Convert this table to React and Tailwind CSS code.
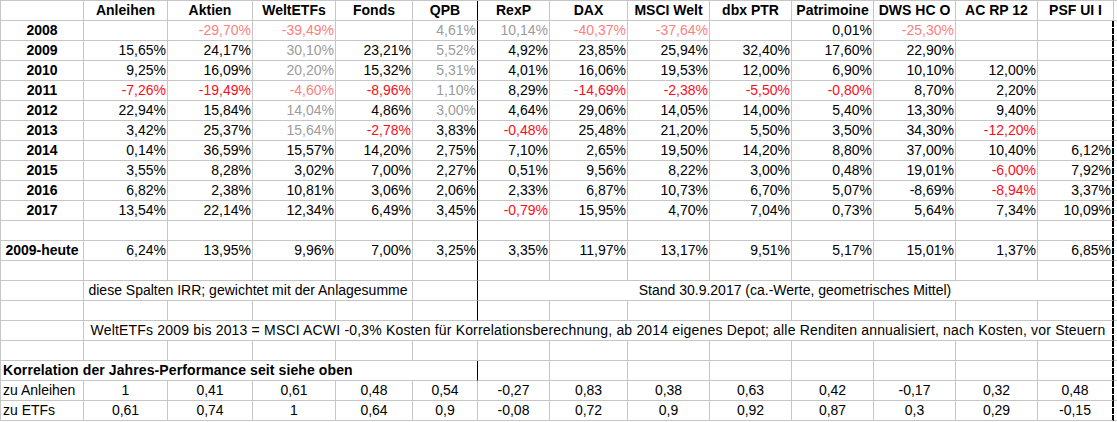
import React from "react";
import clsx from "clsx";

const headers = ["Anleihen", "Aktien", "WeltETFs", "Fonds", "QPB", "RexP", "DAX", "MSCI Welt", "dbx PTR", "Patrimoine", "DWS HC O", "AC RP 12", "PSF UI I"];

// r = rot, l = hellrot (geschätzt), g = grau (geschätzt)
const tone = { r: "text-[#fc0d1b]", l: "text-[#fd8080]", g: "text-[#9c9c9c]" };

const jahre = [
    ["2008", ["", "l:-29,70%", "l:-39,49%", "", "g:4,61%", "g:10,14%", "l:-40,37%", "l:-37,64%", "", "0,01%", "l:-25,30%", "", ""]],
    ["2009", ["15,65%", "24,17%", "g:30,10%", "23,21%", "g:5,52%", "4,92%", "23,85%", "25,94%", "32,40%", "17,60%", "22,90%", "", ""]],
    ["2010", ["9,25%", "16,09%", "g:20,20%", "15,32%", "g:5,31%", "4,01%", "16,06%", "19,53%", "12,00%", "6,90%", "10,10%", "12,00%", ""]],
    ["2011", ["r:-7,26%", "r:-19,49%", "l:-4,60%", "r:-8,96%", "g:1,10%", "8,29%", "r:-14,69%", "r:-2,38%", "r:-5,50%", "r:-0,80%", "8,70%", "2,20%", ""]],
    ["2012", ["22,94%", "15,84%", "g:14,04%", "4,86%", "g:3,00%", "4,64%", "29,06%", "14,05%", "14,00%", "5,40%", "13,30%", "9,40%", ""]],
    ["2013", ["3,42%", "25,37%", "g:15,64%", "r:-2,78%", "3,83%", "r:-0,48%", "25,48%", "21,20%", "5,50%", "3,50%", "34,30%", "r:-12,20%", ""]],
    ["2014", ["0,14%", "36,59%", "15,57%", "14,20%", "2,75%", "7,10%", "2,65%", "19,50%", "14,20%", "8,80%", "37,00%", "10,40%", "6,12%"]],
    ["2015", ["3,55%", "8,28%", "3,02%", "7,00%", "2,27%", "0,51%", "9,56%", "8,22%", "3,00%", "0,48%", "19,01%", "r:-6,00%", "7,92%"]],
    ["2016", ["6,82%", "2,38%", "10,81%", "3,06%", "2,06%", "2,33%", "6,87%", "10,73%", "6,70%", "5,07%", "-8,69%", "r:-8,94%", "3,37%"]],
    ["2017", ["13,54%", "22,14%", "12,34%", "6,49%", "3,45%", "r:-0,79%", "15,95%", "4,70%", "7,04%", "0,73%", "5,64%", "7,34%", "10,09%"]],
];

const heute = ["6,24%", "13,95%", "9,96%", "7,00%", "3,25%", "3,35%", "11,97%", "13,17%", "9,51%", "5,17%", "15,01%", "1,37%", "6,85%"];

const korrelation = [
    ["zu Anleihen", ["1", "0,41", "0,61", "0,48", "0,54", "-0,27", "0,83", "0,38", "0,63", "0,42", "-0,17", "0,32", "0,48"]],
    ["zu ETFs", ["0,61", "0,74", "1", "0,64", "0,9", "-0,08", "0,72", "0,9", "0,92", "0,87", "0,3", "0,29", "-0,15"]],
];

const base = "h-[20px] border-b border-r border-[#c6c6c6] leading-[19px] whitespace-nowrap";
const schwarz = "border-r-black";
const gestrichelt = "border-r-2 border-r-black [border-right-style:dashed]";

function parse(v) {
    const m = v.match(/^([rlg]):(.*)$/);
    return m ? [tone[m[1]], m[2]] : ["text-black", v];
}

// i = Spaltenindex der Wertespalte (0..12)
function randFuer(i, linie, dash) {
    if (i === 4 && linie) return schwarz;
    if (i === 12 && dash) return gestrichelt;
    return "";
}

function Rest() {
    return <div className="h-[20px] border-b border-[#c6c6c6]" />;
}

function LeereZeile({ linie = true }) {
    return (
        <>
            <div className={base} />
            {headers.map((_, i) => (
                <div key={i} className={clsx(base, randFuer(i, linie, true))} />
            ))}
            <Rest />
        </>
    );
}

function WerteZeile({ label, werte }) {
    return (
        <>
            <div className={clsx(base, "text-center font-bold")}>{label}</div>
            {werte.map((v, i) => {
                const [farbe, text] = parse(v);
                return (
                    <div key={i} className={clsx(base, "text-right pr-[1px]", farbe, randFuer(i, true, true))}>
                        {text}
                    </div>
                );
            })}
            <Rest />
        </>
    );
}

export default function App() {
    return (
        <div className="w-[1117px] h-[422px] overflow-hidden bg-white font-['Liberation_Sans',Arial,sans-serif] text-[14px] text-black">
            <div className="grid grid-cols-[83px_84px_85px_83px_77px_65px_72px_78px_82px_82px_82px_82px_82px_76px_1fr] border-t border-l border-[#c6c6c6]">
                {/* Kopfzeile */}
                <div className={base} />
                {headers.map((h, i) => (
                    <div key={h} className={clsx(base, "text-center font-bold", i === 4 && schwarz)}>
                        {h}
                    </div>
                ))}
                <Rest />

                {jahre.map(([label, werte]) => (
                    <WerteZeile key={label} label={label} werte={werte} />
                ))}

                <LeereZeile />
                <WerteZeile label="2009-heute" werte={heute} />
                <LeereZeile />

                {/* Hinweiszeile */}
                <div className={base} />
                <div className={clsx(base, "col-span-4 text-center")}>diese Spalten IRR; gewichtet mit der Anlagesumme</div>
                <div className={clsx(base, schwarz)} />
                <div className={clsx(base, "col-span-8 text-center", gestrichelt)}>Stand 30.9.2017 (ca.-Werte, geometrisches Mittel)</div>
                <Rest />

                <LeereZeile />

                <div className={base} />
                <div className={clsx(base, "col-span-13 text-center tracking-[0.18px]", gestrichelt)}>
                    WeltETFs 2009 bis 2013 = MSCI ACWI -0,3% Kosten für Korrelationsberechnung, ab 2014 eigenes Depot; alle Renditen annualisiert, nach Kosten, vor Steuern
                </div>
                <Rest />

                <LeereZeile linie={false} />

                {/* Korrelation */}
                <div className={clsx(base, "col-span-6 pl-[2px] font-bold tracking-[0.1px]", schwarz)}>
                    Korrelation der Jahres-Performance seit siehe oben
                </div>
                {headers.slice(5).map((_, j) => (
                    <div key={j} className={clsx(base, j === 7 && gestrichelt)} />
                ))}
                <Rest />

                {korrelation.map(([label, werte]) => (
                    <React.Fragment key={label}>
                        <div className={clsx(base, "pl-[2px]")}>{label}</div>
                        {werte.map((v, i) => (
                            <div key={i} className={clsx(base, "text-center", i === 12 && gestrichelt)}>
                                {v}
                            </div>
                        ))}
                        <Rest />
                    </React.Fragment>
                ))}
            </div>
        </div>
    );
}
